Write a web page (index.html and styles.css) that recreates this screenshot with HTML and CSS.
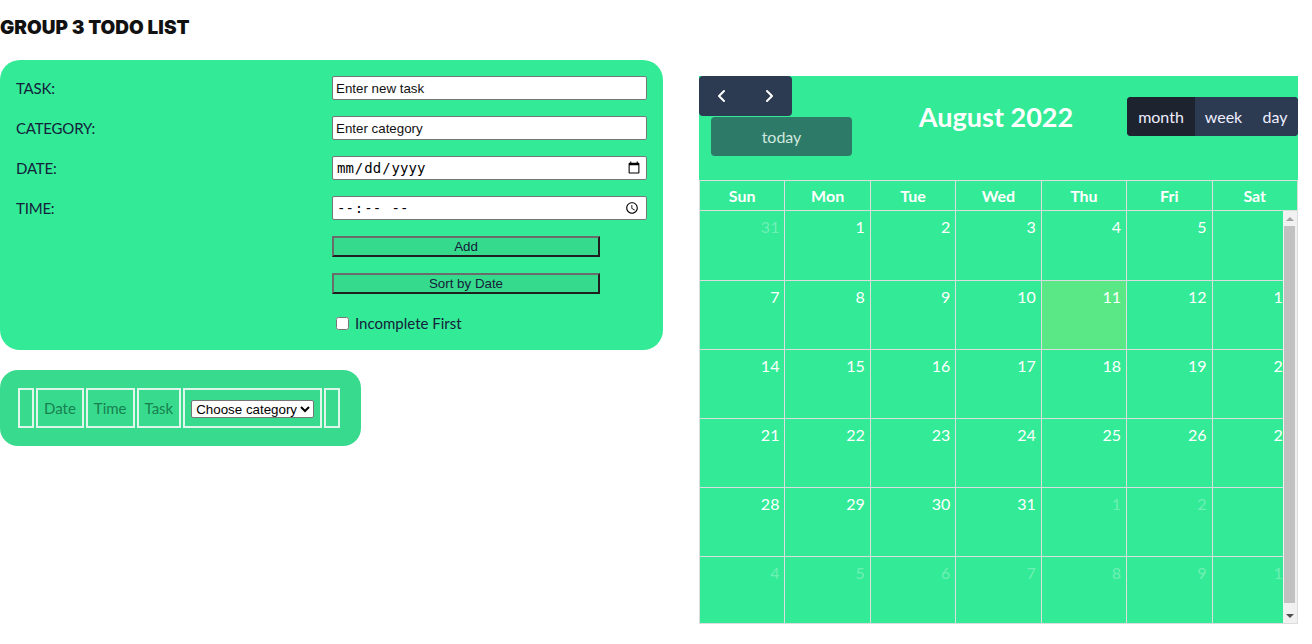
FILE: index.html
```html
<!DOCTYPE html>
<html>
<head>
<meta charset="utf-8">
<link rel="stylesheet" href="styles.css">
</head>
<body>
<div class="page">
  <div class="left">
    <h1 class="title">GROUP 3 TODO LIST</h1>
    <form class="form-box">
      <label class="lbl">TASK:</label>
      <input class="field" type="text" placeholder="Enter new task">
      <label class="lbl">CATEGORY:</label>
      <input class="field" type="text" placeholder="Enter category">
      <label class="lbl">DATE:</label>
      <input class="field mono" type="date">
      <label class="lbl">TIME:</label>
      <input class="field mono" type="time">
      <span></span>
      <button type="button" class="btn">Add</button>
      <span></span>
      <button type="button" class="btn">Sort by Date</button>
      <span></span>
      <label class="check"><input type="checkbox" class="cb"> Incomplete First</label>
    </form>
    <div class="list-box">
      <table class="list-table">
        <tr>
          <td class="empty"></td>
          <td>Date</td>
          <td>Time</td>
          <td>Task</td>
          <td class="sel-cell"><select class="sel"><option>Choose category</option></select></td>
          <td class="empty"></td>
        </tr>
      </table>
    </div>
  </div>
  <div class="calendar">
    <div class="toolbar">
      <div class="tb-left">
        <div class="nav-group">
          <button class="nav-btn" type="button"><svg width="14" height="14" viewBox="0 0 14 14"><path d="M9 2 L4 7 L9 12" fill="none" stroke="#fff" stroke-width="2" stroke-linecap="round" stroke-linejoin="round"/></svg></button>
          <button class="nav-btn" type="button"><svg width="14" height="14" viewBox="0 0 14 14"><path d="M5 2 L10 7 L5 12" fill="none" stroke="#fff" stroke-width="2" stroke-linecap="round" stroke-linejoin="round"/></svg></button>
        </div>
        <button class="today" type="button">today</button>
      </div>
      <h2 class="cal-title">August 2022</h2>
      <div class="view-group">
        <button class="view-btn active w-month" type="button">month</button>
        <button class="view-btn w-week" type="button">week</button>
        <button class="view-btn w-day" type="button">day</button>
      </div>
    </div>
    <table class="cal-head">
      <tr><th>Sun</th><th>Mon</th><th>Tue</th><th>Wed</th><th>Thu</th><th>Fri</th><th>Sat</th></tr>
    </table>
    <div class="scroller">
      <div class="viewport">
        <table class="cal-body">
          <tr><td class="other">31</td><td>1</td><td>2</td><td>3</td><td>4</td><td>5</td><td>6</td></tr>
          <tr><td>7</td><td>8</td><td>9</td><td>10</td><td class="today-cell">11</td><td>12</td><td>13</td></tr>
          <tr><td>14</td><td>15</td><td>16</td><td>17</td><td>18</td><td>19</td><td>20</td></tr>
          <tr><td>21</td><td>22</td><td>23</td><td>24</td><td>25</td><td>26</td><td>27</td></tr>
          <tr><td>28</td><td>29</td><td>30</td><td>31</td><td class="other">1</td><td class="other">2</td><td class="other">3</td></tr>
          <tr><td class="other">4</td><td class="other">5</td><td class="other">6</td><td class="other">7</td><td class="other">8</td><td class="other">9</td><td class="other">10</td></tr>
        </table>
      </div>
      <div class="sb">
        <div class="sb-btn"><span class="arrow-up"></span></div>
        <div class="sb-track"><div class="sb-thumb"></div></div>
        <div class="sb-btn"><span class="arrow-down"></span></div>
      </div>
    </div>
  </div>
</div>
</body>
</html>
```

FILE: styles.css
```css
html, body {
  margin: 0;
  padding: 0;
  background: #fff;
}
body {
  font-family: "Lato", "Open Sans", sans-serif;
  overflow: hidden;
}
.page {
  display: flex;
  align-items: flex-start;
  gap: 36px;
}
.left {
  width: 663px;
  flex: none;
}
.title {
  margin: 0;
  padding-top: 18px;
  height: 60px;
  box-sizing: border-box;
  font-family: "Inter", sans-serif;
  font-weight: 900;
  font-size: 19px;
  letter-spacing: 0;
  color: #111;
  line-height: 20px;
}
.form-box {
  background: #33ea97;
  border-radius: 20px;
  padding: 16px 16px 18px 16px;
  display: grid;
  grid-template-columns: 316px 315px;
  row-gap: 16px;
  align-items: center;
  margin: 0;
}
.lbl {
  font-size: 15px;
  color: #14213a;
  line-height: 24px;
  letter-spacing: -0.2px;
}
.field {
  box-sizing: border-box;
  height: 24px;
  width: 315px;
  margin: 0;
  font-family: "Liberation Sans", Arial, sans-serif;
  font-size: 13.33px;
  color: #000;
  border: 1px solid #767676;
  border-radius: 2px;
  padding: 1px 3px;
  background: #fff;
}
.field.mono {
  font-family: "DejaVu Sans Mono", monospace;
  font-size: 14px;
}
.field::placeholder {
  color: #111;
}
.btn {
  box-sizing: border-box;
  width: 268px;
  height: 21px;
  margin: 0;
  padding: 0;
  font-family: "Liberation Sans", Arial, sans-serif;
  font-size: 13.33px;
  color: #14213a;
  background: #36da8c;
  border-style: solid;
  border-width: 2px;
  border-color: #6b6b6b #1f1f1f #1f1f1f #6b6b6b;
}
.check {
  display: flex;
  align-items: center;
  gap: 6px;
  font-size: 15px;
  color: #14213a;
  height: 18px;
  margin-top: 4px;
}
.cb {
  width: 13px;
  height: 13px;
  margin: 0 0 0 4px;
}
.list-box {
  margin-top: 20px;
  width: 361px;
  box-sizing: border-box;
  background: #38db8e;
  border-radius: 18px;
  padding: 18px;
}
.list-table {
  border-collapse: separate;
  border-spacing: 2px 0;
  margin-left: -2px;
}
.list-table td {
  border: 2px solid #dff7ea;
  height: 36px;
  padding: 0 6px;
  color: #16804f;
  font-size: 15px;
}
.list-table td.empty {
  padding: 0;
  width: 12px;
}
.sel {
  font-family: "Liberation Sans", Arial, sans-serif;
  font-size: 13.33px;
  height: 18px;
  padding: 0;
  color: #000;
  background: #fff;
  border: 1px solid #767676;
  border-radius: 2px;
}
.calendar {
  margin-top: 76px;
  width: 599px;
  flex: none;
  background: #33ea97;
}
.toolbar {
  display: flex;
  align-items: flex-start;
  height: 104px;
}
.tb-left {
  width: 152px;
  display: flex;
  flex-direction: column;
  align-items: flex-start;
}
.nav-group {
  display: flex;
  background: #2c3a52;
  border-radius: 4px;
  width: 93px;
  height: 40px;
}
.nav-btn {
  flex: 1;
  background: none;
  border: 0;
  padding: 0;
  display: flex;
  align-items: center;
  justify-content: center;
}
.today {
  margin: 1px 0 0 12px;
  width: 141px;
  height: 39px;
  border: 0;
  border-radius: 4px;
  background: #2e7a68;
  color: #cfe8de;
  font-family: "Lato", sans-serif;
  font-size: 16px;
}
.cal-title {
  flex: 1;
  margin: 24px 0 0 0;
  text-align: center;
  color: #fff;
  font-size: 27px;
  font-weight: 700;
  line-height: 34px;
  padding-left: 14px;
}
.view-group {
  margin-top: 21px;
  display: flex;
  height: 39px;
  border-radius: 4px;
  overflow: hidden;
  background: #2c3a52;
}
.view-btn {
  border: 0;
  background: #2c3a52;
  color: #eef;
  font-family: "Lato", sans-serif;
  font-size: 16px;
  padding: 0;
  text-align: center;
}
.view-btn.active {
  background: #1e2330;
}
.w-month { width: 68px; }
.w-week { width: 57px; }
.w-day { width: 46px; }
.cal-head, .cal-body {
  width: 599px;
  border-collapse: collapse;
  table-layout: fixed;
}
.cal-head th {
  height: 29px;
  border: 1px solid #ddd;
  color: #fff;
  font-size: 16px;
  font-weight: 700;
  padding: 0;
}
.scroller {
  display: flex;
  height: 413px;
  border-left: 1px solid #ddd;
  border-bottom: 1px solid #ddd;
  box-sizing: border-box;
}
.viewport {
  flex: 1;
  overflow: hidden;
}
.sb {
  width: 14px;
  flex: none;
  background: #f1f1f1;
  border-right: 1px solid #ddd;
  display: flex;
  flex-direction: column;
}
.sb-btn {
  height: 15px;
  flex: none;
  display: flex;
  align-items: center;
  justify-content: center;
}
.arrow-up {
  width: 0;
  height: 0;
  border-left: 4px solid transparent;
  border-right: 4px solid transparent;
  border-bottom: 4px solid #a3a3a3;
}
.arrow-down {
  width: 0;
  height: 0;
  border-left: 4px solid transparent;
  border-right: 4px solid transparent;
  border-top: 4px solid #505050;
}
.sb-track {
  flex: 1;
  padding: 0 2px 5px 1px;
  display: flex;
}
.sb-thumb {
  flex: 1;
  background: #c1c1c1;
}
.cal-body {
  margin-left: -1px;
}
.cal-body tr:first-child td {
  border-top: 0;
}
.cal-body td {
  height: 69px;
  border: 1px solid #ddd;
  vertical-align: top;
  text-align: right;
  color: #fff;
  font-size: 16px;
  padding: 6px 5px 0 0;
  box-sizing: border-box;
}
.cal-body td.other {
  color: rgba(255, 255, 255, 0.3);
}
.cal-body td.today-cell {
  background: #5ae886;
}
```
